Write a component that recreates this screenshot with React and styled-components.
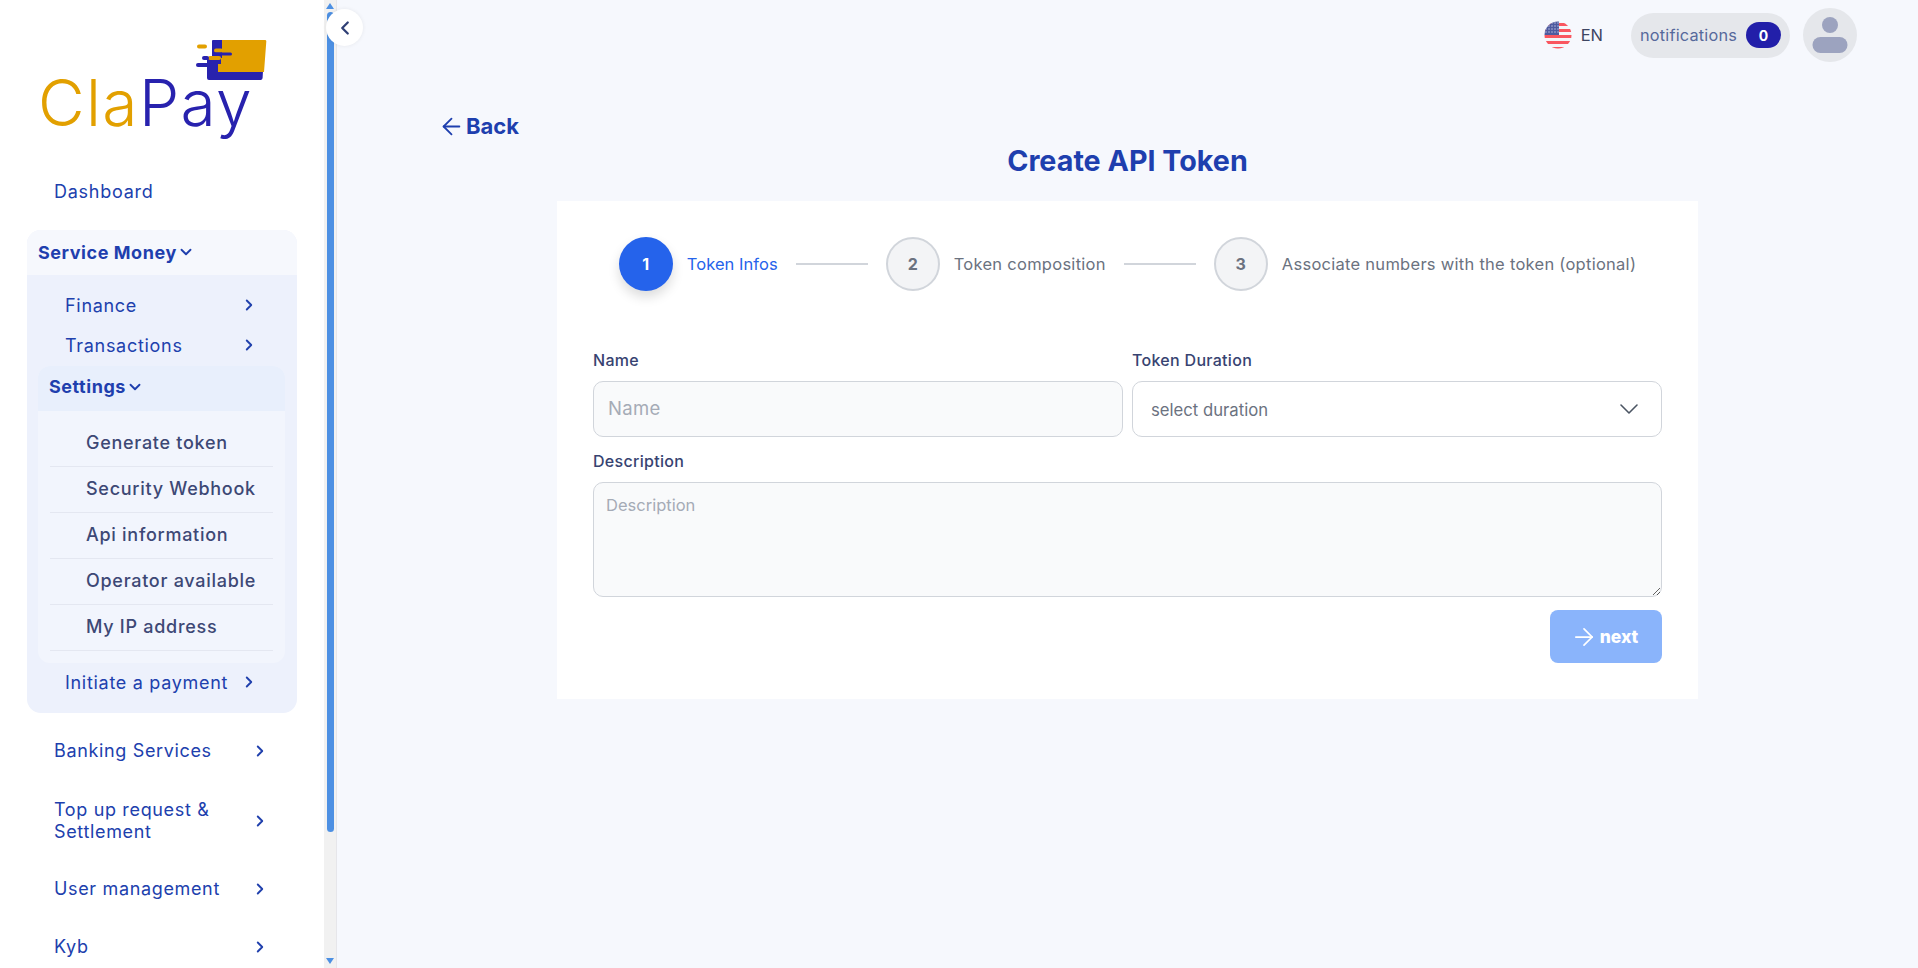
import React from 'react';
import styled, { createGlobalStyle } from 'styled-components';
import { ArrowLeft, ArrowRight, ChevronDown, ChevronLeft, ChevronRight } from 'lucide-react';

const GlobalStyle = createGlobalStyle`
    html, body {
        margin: 0;
        height: 100%;
        overflow: hidden;
    }
    * {
        box-sizing: border-box;
    }
    body {
        font-family: Inter, "Open Sans", sans-serif;
        background-color: #f6f8fd;
    }
`;

const Page = styled.div`
    display: flex;
    height: 968px;
    position: relative;
`;

const Sidebar = styled.aside`
    width: 324px;
    flex-shrink: 0;
    height: 100%;
    background-color: #fff;
    overflow: hidden;
`;

const ScrollTrack = styled.div`
    width: 13px;
    flex-shrink: 0;
    display: flex;
    flex-direction: column;
    align-items: center;
    justify-content: space-between;
    padding: 3px 0 4px;
    background-color: #f1f1f1;
    border-right: 1px solid #e6e6ea;
`;

const ScrollThumb = styled.div`
    width: 7px;
    height: 820px;
    margin-top: 3px;
    border-radius: 4px;
    background-color: #4d90e3;
`;

const ScrollSpacer = styled.div`
    flex: 1;
`;

const ScrollArrow = styled.div`
    width: 0;
    height: 0;
    border-left: 4px solid transparent;
    border-right: 4px solid transparent;
    ${(p) => (p.$down ? 'border-top: 6px solid #4d90e3;' : 'border-bottom: 6px solid #4d90e3;')}
`;

const CollapseButton = styled.button`
    position: absolute;
    left: 326px;
    top: 9px;
    width: 37px;
    height: 37px;
    display: flex;
    align-items: center;
    justify-content: center;
    padding: 0;
    border: none;
    border-radius: 50%;
    color: #2f3f75;
    background-color: #fff;
    box-shadow: 0 0 4px rgba(0, 0, 0, 0.07);
`;

const LogoBox = styled.div`
    height: 166px;
    padding-top: 36px;
`;

const LogoIcon = styled.svg`
    display: block;
    margin-left: 190px;
`;

const LogoText = styled.div`
    margin: -12px 0 0 38px;
    font-weight: 300;
    font-size: 64px;
    line-height: 66px;
    letter-spacing: 1.4px;
    color: #2822ae;
`;

const LogoGold = styled.span`
    color: #e2a000;
`;

const NavItem = styled.div`
    display: flex;
    align-items: center;
    justify-content: space-between;
    width: 215px;
    height: ${(p) => p.$height || 50}px;
    margin-left: 54px;
    font-size: 18px;
    line-height: 22px;
    letter-spacing: 0.65px;
    color: #2040ad;
`;

const DashboardItem = styled(NavItem)`
    padding-top: 2px;
    letter-spacing: 0.75px;
`;

const NavGap = styled.div`
    height: ${(p) => p.$size}px;
`;

const ServiceBox = styled.div`
    width: 270px;
    margin: 14px 0 0 27px;
    border-radius: 14px;
    overflow: hidden;
    background-color: #edf1fc;
`;

const GroupHeader = styled.div`
    display: flex;
    align-items: center;
    height: 45px;
    font-size: 18px;
    font-weight: 700;
    letter-spacing: 0.55px;
    color: #1f3fae;
`;

const ServiceHeader = styled(GroupHeader)`
    padding: 0 0 1px 11px;
    background-color: #f6f8fd;
`;

const SubItem = styled.div`
    display: flex;
    align-items: center;
    justify-content: space-between;
    height: ${(p) => p.$height || 40}px;
    padding: 0 39px 0 38px;
    font-size: 18px;
    letter-spacing: 0.7px;
    color: #2040ad;
`;

const SettingsBox = styled.div`
    width: 247px;
    margin: 1px 0 0 11px;
    border-radius: 12px;
    overflow: hidden;
    background-color: #f2f5fd;
`;

const SettingsHeader = styled(GroupHeader)`
    padding: 0 0 4px 11px;
    background-color: #e8effc;
`;

const SettingsList = styled.div`
    padding: 10px 12px 12px;
`;

const SettingsLink = styled.div`
    display: flex;
    align-items: center;
    height: 46px;
    padding: 0 0 2px 36px;
    border-bottom: 1px solid #e4e7f1;
    font-size: 18px;
    font-weight: 500;
    letter-spacing: 0.72px;
    color: #3d4875;
`;

const Main = styled.main`
    flex: 1;
    min-width: 0;
`;

const Topbar = styled.header`
    display: flex;
    align-items: center;
    justify-content: flex-end;
    height: 70px;
    padding: 0 61px 0 0;
`;

const Language = styled.div`
    display: flex;
    align-items: center;
    gap: 9px;
    margin-right: 28px;
    font-size: 16.5px;
    color: #3d4562;
`;

const NotificationPill = styled.div`
    display: flex;
    align-items: center;
    justify-content: space-between;
    width: 159px;
    height: 45px;
    padding: 0 9px 0 9px;
    border-radius: 23px;
    font-size: 16.3px;
    letter-spacing: 0.2px;
    color: #56699b;
    background-color: #e5e7eb;
`;

const Badge = styled.span`
    display: flex;
    align-items: center;
    justify-content: center;
    width: 35px;
    height: 26px;
    border-radius: 13px;
    font-size: 14px;
    font-weight: 700;
    color: #fff;
    background-color: #221fa9;
`;

const Avatar = styled.div`
    display: flex;
    align-items: center;
    justify-content: center;
    width: 54px;
    height: 54px;
    margin-left: 13px;
    border-radius: 50%;
    background-color: #e5e7eb;
`;

const BackLink = styled.a`
    display: flex;
    align-items: center;
    gap: 1px;
    width: max-content;
    margin: 40px 0 0 101px;
    font-size: 22px;
    line-height: 32px;
    font-weight: 700;
    color: #1e3fae;
`;

const Title = styled.h1`
    margin: 1px 0 0;
    text-align: center;
    font-size: 28.7px;
    line-height: 36px;
    font-weight: 700;
    color: #1e3fae;
`;

const Card = styled.section`
    width: 1141px;
    height: 498px;
    margin: 22px 0 0 220px;
    padding: 36px 36px 0;
    background-color: #fff;
`;

const Stepper = styled.ol`
    display: flex;
    align-items: center;
    justify-content: center;
    height: 54px;
    margin: 0;
    padding: 0;
    list-style: none;
`;

const Step = styled.li`
    display: flex;
    align-items: center;
    gap: 14px;
`;

const StepCircle = styled.span`
    display: flex;
    align-items: center;
    justify-content: center;
    width: 54px;
    height: 54px;
    border-radius: 50%;
    font-size: 16px;
    font-weight: 700;
    ${(p) =>
        p.$active
            ? 'color: #fff; background-color: #2563eb; box-shadow: 0 6px 12px rgba(0, 0, 0, 0.14);'
            : 'color: #6b7280; background-color: #f3f4f6; border: 2px solid #d1d5db;'}
`;

const StepLabel = styled.span`
    font-size: 16.5px;
    letter-spacing: ${(p) => (p.$active ? '0.05px' : '0.27px')};
    white-space: nowrap;
    color: ${(p) => (p.$active ? '#2563eb' : '#6b7280')};
`;

const StepLine = styled.span`
    width: 72px;
    height: 2px;
    margin: 0 18px;
    background-color: #d1d5db;
`;

const FormRow = styled.div`
    display: grid;
    grid-template-columns: 530px 530px;
    gap: 9px;
    margin-top: 59px;
`;

const Field = styled.label`
    display: block;
`;

const FieldLabel = styled.span`
    display: block;
    height: 31px;
    font-size: 16px;
    line-height: 20px;
    font-weight: 500;
    letter-spacing: 0.3px;
    color: #374371;
`;

const TextInput = styled.input`
    display: block;
    width: 100%;
    height: 56px;
    padding: 0 14px 2px;
    border: 1.5px solid #d1d5db;
    border-radius: 10px;
    outline: none;
    font-family: inherit;
    font-size: 18.5px;
    letter-spacing: 0.3px;
    background-color: #f9fafb;

    &::placeholder {
        color: #a5abb6;
    }
`;

const SelectWrap = styled.div`
    position: relative;
    color: #4b5563;

    svg {
        position: absolute;
        right: 17px;
        top: 12px;
        pointer-events: none;
    }
`;

const Select = styled.select`
    display: block;
    width: 100%;
    height: 56px;
    padding: 2px 18px 0;
    border: 1.5px solid #d1d5db;
    border-radius: 10px;
    outline: none;
    appearance: none;
    font-family: inherit;
    font-size: 16.7px;
    color: #6b7280;
    background-color: #fff;
`;

const DescriptionField = styled(Field)`
    margin-top: 14px;
`;

const TextArea = styled.textarea`
    display: block;
    width: 100%;
    height: 115px;
    padding: 11px 12px;
    border: 1.5px solid #d1d5db;
    border-radius: 10px;
    outline: none;
    font-family: inherit;
    font-size: 16.5px;
    line-height: 22px;
    background-color: #f9fafb;

    &::placeholder {
        color: #a5abb6;
    }
`;

const FormActions = styled.div`
    display: flex;
    justify-content: flex-end;
    margin-top: 13px;
`;

const NextButton = styled.button`
    display: flex;
    align-items: center;
    justify-content: center;
    gap: 2px;
    width: 112px;
    height: 53px;
    padding: 0 4px 0 0;
    border: none;
    border-radius: 8px;
    font-family: inherit;
    font-size: 17.5px;
    font-weight: 800;
    color: #fff;
    background-color: #8ab4fb;
`;

const settingsLinks = ['Generate token', 'Security Webhook', 'Api information', 'Operator available', 'My IP address'];

const steps = [
    { id: 1, label: 'Token Infos', active: true },
    { id: 2, label: 'Token composition' },
    { id: 3, label: 'Associate numbers with the token (optional)' }
];

function UsFlag() {
    const stripes = [2, 8, 14, 20, 26];
    return (
        <svg width="28" height="28" viewBox="0 0 28 28">
            <defs>
                <clipPath id="flag-circle">
                    <circle cx="14" cy="14" r="13.5" />
                </clipPath>
            </defs>
            <g clipPath="url(#flag-circle)">
                <rect width="28" height="28" fill="#f4f5f8" />
                {stripes.map((y) => (
                    <rect key={y} y={y} width="28" height="3" fill="#f9565f" />
                ))}
                <rect width="15" height="14" fill="#4d5a9f" />
                {[2, 5, 8, 11].map((y) =>
                    [2, 5, 8, 11, 14].map((x) => <circle key={`${x}-${y}`} cx={x} cy={y} r="0.7" fill="#c9cdea" />)
                )}
            </g>
        </svg>
    );
}

export default function App() {
    return (
        <Page>
            <GlobalStyle />
            <Sidebar>
                <LogoBox>
                    <LogoIcon width="80" height="46" viewBox="190 36 80 46">
                        <path d="M212 41 q0-1 1-1 h10 v31 h40 l-.4 7 q-.2 2-2 2 H209 q-2 0-2-2 V58 h5 z" fill="#2822ae" />
                        <path d="M222 40 h43 q1.500 0 1.300 1.500 L264 72 H218 v-8 h3 V58 h-13 v-0 h14 V40 z" fill="#e2a000" />
                        <rect x="197" y="44.500" width="10" height="4" rx="2" fill="#e2a000" />
                        <rect x="214" y="48.500" width="9" height="4" rx="2" fill="#e2a000" />
                        <rect x="214" y="52.500" width="18" height="3" rx="1.500" fill="#2822ae" />
                        <rect x="208" y="56" width="13" height="4" rx="2" fill="#e2a000" />
                        <rect x="202" y="56" width="7" height="4" rx="2" fill="#2822ae" />
                        <rect x="196" y="63" width="14" height="4" rx="2" fill="#2822ae" />
                    </LogoIcon>
                    <LogoText>
                        <LogoGold>Cla</LogoGold>Pay
                    </LogoText>
                </LogoBox>
                <DashboardItem>Dashboard</DashboardItem>
                <ServiceBox>
                    <ServiceHeader>
                        Service Money
                        <ChevronDown size={18} strokeWidth={2.5} />
                    </ServiceHeader>
                    <NavGap $size={10} />
                    <SubItem>
                        Finance
                        <ChevronRight size={18} strokeWidth={2.5} />
                    </SubItem>
                    <SubItem>
                        Transactions
                        <ChevronRight size={18} strokeWidth={2.5} />
                    </SubItem>
                    <SettingsBox>
                        <SettingsHeader>
                            Settings
                            <ChevronDown size={18} strokeWidth={2.5} />
                        </SettingsHeader>
                        <SettingsList>
                            {settingsLinks.map((link) => (
                                <SettingsLink key={link}>{link}</SettingsLink>
                            ))}
                        </SettingsList>
                    </SettingsBox>
                    <SubItem $height={38}>
                        Initiate a payment
                        <ChevronRight size={18} strokeWidth={2.5} />
                    </SubItem>
                    <NavGap $size={12} />
                </ServiceBox>
                <NavGap $size={13} />
                <NavItem>
                    Banking Services
                    <ChevronRight size={18} strokeWidth={2.5} />
                </NavItem>
                <NavGap $size={16} />
                <NavItem $height={58}>
                    <span>
                        Top up request &amp;
                        <br />
                        Settlement
                    </span>
                    <ChevronRight size={18} strokeWidth={2.5} />
                </NavItem>
                <NavGap $size={14} />
                <NavItem>
                    User management
                    <ChevronRight size={18} strokeWidth={2.5} />
                </NavItem>
                <NavGap $size={8} />
                <NavItem>
                    Kyb
                    <ChevronRight size={18} strokeWidth={2.5} />
                </NavItem>
            </Sidebar>
            <ScrollTrack>
                <ScrollArrow />
                <ScrollThumb />
                <ScrollSpacer />
                <ScrollArrow $down />
            </ScrollTrack>
            <CollapseButton aria-label="Collapse menu">
                <ChevronLeft size={22} strokeWidth={2.5} />
            </CollapseButton>
            <Main>
                <Topbar>
                    <Language>
                        <UsFlag />
                        EN
                    </Language>
                    <NotificationPill>
                        notifications
                        <Badge>0</Badge>
                    </NotificationPill>
                    <Avatar>
                        <svg width="36" height="36" viewBox="0 0 36 36">
                            <circle cx="18" cy="8" r="8" fill="#9ca3bf" />
                            <rect x="0.500" y="20" width="35" height="16" rx="8" fill="#9ca3bf" />
                        </svg>
                    </Avatar>
                </Topbar>
                <BackLink>
                    <ArrowLeft size={27} strokeWidth={1.6} />
                    Back
                </BackLink>
                <Title>Create API Token</Title>
                <Card>
                    <Stepper>
                        {steps.map((step, index) => (
                            <React.Fragment key={step.id}>
                                {index > 0 && <StepLine />}
                                <Step>
                                    <StepCircle $active={step.active}>{step.id}</StepCircle>
                                    <StepLabel $active={step.active}>{step.label}</StepLabel>
                                </Step>
                            </React.Fragment>
                        ))}
                    </Stepper>
                    <FormRow>
                        <Field>
                            <FieldLabel>Name</FieldLabel>
                            <TextInput placeholder="Name" />
                        </Field>
                        <Field>
                            <FieldLabel>Token Duration</FieldLabel>
                            <SelectWrap>
                                <Select defaultValue="">
                                    <option value="">select duration</option>
                                </Select>
                                <ChevronDown size={32} strokeWidth={1.2} />
                            </SelectWrap>
                        </Field>
                    </FormRow>
                    <DescriptionField>
                        <FieldLabel>Description</FieldLabel>
                        <TextArea placeholder="Description" />
                    </DescriptionField>
                    <FormActions>
                        <NextButton>
                            <ArrowRight size={28} strokeWidth={1.5} />
                            next
                        </NextButton>
                    </FormActions>
                </Card>
            </Main>
        </Page>
    );
}
